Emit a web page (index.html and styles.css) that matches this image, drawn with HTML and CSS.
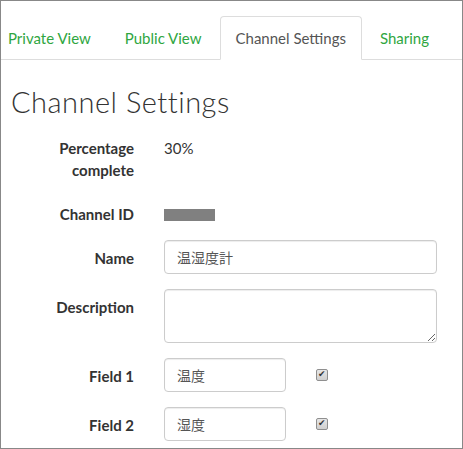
FILE: index.html
```html
<!DOCTYPE html>
<html lang="ja">
  <head>
    <meta charset="UTF-8" />
    <meta name="viewport" content="width=device-width, initial-scale=1.0" />
    <title>Channel Settings</title>
    <link rel="stylesheet" href="styles.css">
  </head>
  <body>
    <div class="frame">
      <ul class="tabs">
        <li class="tab first"><a href="#">Private View</a></li>
        <li class="tab"><a href="#">Public View</a></li>
        <li class="tab active"><a href="#">Channel Settings</a></li>
        <li class="tab"><a href="#">Sharing</a></li>
      </ul>

      <div class="content">
        <h1>Channel Settings</h1>

        <form class="form">
          <div class="row">
            <label class="label">Percentage<br />complete</label>
            <div class="value">30%</div>
          </div>

          <div class="row">
            <label class="label">Channel ID</label>
            <div class="value"><span class="hidden-id"></span></div>
          </div>

          <div class="row">
            <label class="label">Name</label>
            <input class="input wide" type="text" value="温湿度計" />
          </div>

          <div class="row">
            <label class="label">Description</label>
            <textarea class="input wide area"></textarea>
          </div>

          <!-- fields -->
          <div class="row">
            <label class="label">Field 1</label>
            <input class="input short" type="text" value="温度" />
            <input class="check" type="checkbox" checked />
          </div>

          <div class="row">
            <label class="label">Field 2</label>
            <input class="input short" type="text" value="湿度" />
            <input class="check" type="checkbox" checked />
          </div>
        </form>
      </div>
    </div>
  </body>
</html>
```

FILE: styles.css
```css
html,
body {
  margin: 0;
  padding: 0;
}

body {
  font-family: Lato, "Noto Sans CJK JP", sans-serif;
  color: #333;
  background: #fff;
}

.frame {
  box-sizing: border-box;
  width: 463px;
  height: 449px;
  border: 1px solid #888;
  overflow: hidden;
}

.tabs {
  display: flex;
  gap: 2px;
  list-style: none;
  margin: 15px 0 0;
  padding: 0;
  border-bottom: 1px solid #ddd;
}

.tab {
  flex: none;
  margin-bottom: -1px;
}

.tab a {
  display: block;
  padding: 10px 15px;
  line-height: 22px;
  font-size: 15px;
  white-space: nowrap;
  color: #2fa63f;
  text-decoration: none;
  border: 1px solid transparent;
  border-radius: 4px 4px 0 0;
}

.tab.first a {
  padding-left: 6px;
}

.tab.active a {
  color: #555;
  background: #fff;
  border-color: #ddd;
  border-bottom-color: #fff;
}

.content {
  padding: 0 10px;
}

h1 {
  font-weight: 300;
  font-size: 29px;
  line-height: 34px;
  color: #333;
  margin: 25px 0 11px;
  letter-spacing: 0.5px;
}

.row {
  display: flex;
  align-items: flex-start;
  margin-bottom: 15px;
}

.label {
  width: 123px;
  flex: none;
  text-align: right;
  font-weight: bold;
  font-size: 15px;
  line-height: 22px;
  padding-top: 7px;
  margin-right: 30px;
}

.value {
  font-size: 15px;
  line-height: 22px;
  padding-top: 7px;
}

.hidden-id {
  display: inline-block;
  width: 51px;
  height: 12px;
  background: #808080;
  vertical-align: -1px;
}

.input {
  box-sizing: border-box;
  height: 34px;
  padding: 6px 12px;
  font-family: "Noto Sans CJK JP", sans-serif;
  font-size: 14px;
  color: #555;
  border: 1px solid #ccc;
  border-radius: 4px;
  box-shadow: inset 0 1px 1px rgba(0, 0, 0, 0.075);
  margin: 0;
}

.wide {
  width: 273px;
}

.area {
  height: 54px;
  resize: vertical;
}

.short {
  width: 122px;
}

.check {
  appearance: none;
  -webkit-appearance: none;
  position: relative;
  box-sizing: border-box;
  width: 12px;
  height: 12px;
  margin: 11px 0 0 30px;
  border: 1px solid #8f8f8f;
  border-radius: 2px;
  background: linear-gradient(#e6e6e6, #cfcfcf);
}

.check:checked::after {
  content: "\2714";
  position: absolute;
  left: 1px;
  top: -2px;
  font-family: "DejaVu Sans", sans-serif;
  font-size: 9px;
  line-height: 12px;
  color: #333;
}
```
